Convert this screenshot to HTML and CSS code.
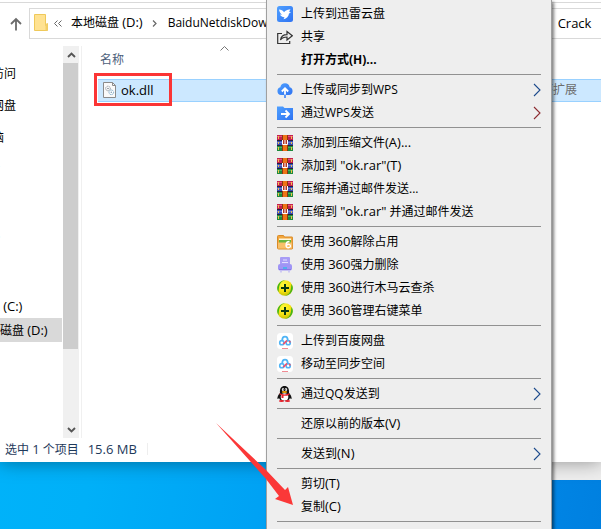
FILE: index.html
```html
<!DOCTYPE html>
<html lang="zh-CN">
<head>
    <meta charset="UTF-8">
    <meta name="viewport" content="width=device-width, initial-scale=1.0">
    <title>ok.dll</title>
    <link rel="stylesheet" href="styles.css">
</head>
<body>

<svg class="sprites" aria-hidden="true">
    <defs>
        <linearGradient id="blue" x1="0" y1="0" x2="1" y2="1">
            <stop offset="0" stop-color="#4fa0ff"/><stop offset="1" stop-color="#2f73f2"/>
        </linearGradient>
        <radialGradient id="ball" cx=".4" cy=".3" r=".75">
            <stop offset="0" stop-color="#fffb3c"/><stop offset=".6" stop-color="#f3e012"/><stop offset="1" stop-color="#b9b800"/>
        </radialGradient>
    </defs>
    <symbol id="chevron" viewBox="0 0 8 14">
        <path d="M1 1l6 6-6 6" fill="none" stroke="currentColor" stroke-width="1.1"/>
    </symbol>
    <symbol id="rar" viewBox="0 0 16 16">
        <path d="M0 0h16v5H0z" fill="#c5204f"/>
        <path d="M0 1h16v1H0z" fill="#e4557c"/>
        <path d="M0 5h16v1H0zM0 10h16v1H0z" fill="#24203a"/>
        <path d="M0 6h16v4H0z" fill="#3a4fb5"/>
        <path d="M0 7h16v1H0z" fill="#6878d2"/>
        <path d="M0 11h16v5H0z" fill="#1e8a3c"/>
        <path d="M0 12h16v1H0z" fill="#45b05c"/>
        <path d="M1 1h1v3H1zM1 7h1v2H1zM1 12h1v3H1zM14 1h1v3h-1zM14 7h1v2h-1zM14 12h1v3h-1z" fill="#f0c04a"/>
        <path d="M5 0h6v16H5z" fill="#8a3512"/>
        <path d="M6 0h4v16H6z" fill="#ee7416"/>
        <path d="M5 5h6v5H5z" fill="#b33524"/>
        <path d="M5.500 5v4.500h5V5M8 5v4" fill="none" stroke="#fff" stroke-width="1"/>
    </symbol>
    <symbol id="guard" viewBox="0 0 16 16">
        <circle cx="8" cy="8" r="7.800" fill="url(#ball)"/>
        <path d="M.3 7C1.500 2.500 5 .2 8 .2 5 1 3 3 2.300 6c-.6 2.500-.5 4-.8 6C.6 10.500 0 9 .3 7zM15.700 9c-1.200 4.500-4.700 6.800-7.700 6.800 3-.8 5-2.800 5.700-5.800.6-2.500.5-4 .8-6 .9 1.500 1.500 3 1.200 5z" fill="#3fb51c"/>
        <path d="M8 4v8M4 8h8" stroke="#0b3b12" stroke-width="2"/>
    </symbol>
    <symbol id="netdisk" viewBox="0 0 16 16">
        <rect width="16" height="16" rx="3.500" fill="#fff"/>
        <path d="M5.300 7C5.300 2.500 10.700 2.500 10.700 7" fill="none" stroke="#4fb4f5" stroke-width="1.800"/>
        <circle cx="4.800" cy="9.700" r="2.100" fill="none" stroke="#4fb4f5" stroke-width="1.600"/>
        <circle cx="11.200" cy="9.700" r="2.100" fill="none" stroke="#4fb4f5" stroke-width="1.600"/>
        <path d="M6.300 11.200L10 7.500" stroke="#f2506b" stroke-width="1.700"/>
        <path d="M12.300 8l1 1.500" stroke="#f2506b" stroke-width="1.500"/>
        <path d="M5 15.500h6" stroke="#f08b93"/>
    </symbol>
</svg>

<main class="desktop">
    <section class="explorer">
        <header class="address-row">
            <button class="up" aria-label="向上">
                <svg width="12" height="14" viewBox="0 0 12 14"><path d="M6 13.500V2M1 7l5-5 5 5" fill="none" stroke="#6b6b6b" stroke-width="1.800"/></svg>
            </button>
            <nav class="address">
                <svg class="folder" width="14" height="17" viewBox="0 0 14 17">
                    <path d="M.5.500h11v11l2-2v7h-13z" fill="#ffe291" stroke="#efc95a"/>
                    <path d="M11.500 9.500h2v7h-2z" fill="#f3cf69"/>
                </svg>
                <svg class="back" width="8" height="7" viewBox="0 0 8 7"><path d="M3.500.5l-3 3 3 3M7.500.5l-3 3 3 3" fill="none" stroke="#666"/></svg>
                <a class="crumb drive" href="#">本地磁盘 <span class="latin">(D:)</span></a>
                <svg class="next" width="5" height="7" viewBox="0 0 5 7"><path d="M1 .5l3 3-3 3" fill="none" stroke="#666" stroke-width="1.200"/></svg>
                <a class="crumb download" href="#">BaiduNetdiskDownload</a>
                <a class="crumb latin" href="#">Crack</a>
            </nav>
        </header>

        <div class="content">
            <nav class="tree">
                <a class="root" href="#">快速访问</a>
                <a class="root" href="#">百度网盘</a>
                <a class="root" href="#">此电脑</a>
                <a href="#">视频</a>
                <a href="#">图片</a>
                <a href="#">文档</a>
                <a href="#">下载</a>
                <a href="#">音乐</a>
                <a href="#">桌面</a>
                <a href="#">系统 <span class="latin">(C:)</span></a>
                <a class="current" href="#">本地磁盘 <span class="latin">(D:)</span></a>
            </nav>
            <div class="scrollbar">
                <button aria-label="向上滚动"><svg width="9" height="6" viewBox="0 0 9 6"><path d="M1 5l3.500-3.500L8 5" fill="none" stroke="#555" stroke-width="1.900"/></svg></button>
                <div class="thumb"></div>
                <button aria-label="向下滚动"><svg width="9" height="6" viewBox="0 0 9 6"><path d="M1 1l3.500 3.500L8 1" fill="none" stroke="#555" stroke-width="1.900"/></svg></button>
            </div>
            <div class="files">
                <svg class="sort" width="9" height="5" viewBox="0 0 9 5"><path d="M.5 4.500l4-4 4 4" fill="none" stroke="#777"/></svg>
                <table>
                    <thead>
                        <tr><th class="name">名称</th><th>类型</th></tr>
                    </thead>
                    <tbody>
                        <tr>
                            <td>
                                <div class="file latin">
                                    <svg width="13" height="16" viewBox="0 0 13 16">
                                        <path d="M.5.500h9l3 3v12H.5z" fill="#fafafa" stroke="#8b8b8b"/>
                                        <path d="M9.500.5v3h3" fill="none" stroke="#8b8b8b"/>
                                        <circle cx="5" cy="6.500" r="2.300" fill="#fff" stroke="#8a939b" stroke-dasharray="1.200 .6"/>
                                        <circle cx="5" cy="6.500" r=".8" fill="#7c868e"/>
                                        <circle cx="8.300" cy="10.300" r="2.300" fill="#fff" stroke="#72a5c8" stroke-dasharray="1.200 .6"/>
                                        <circle cx="8.300" cy="10.300" r=".8" fill="#7c9db4"/>
                                    </svg>
                                    ok.dll
                                </div>
                            </td>
                            <td class="type">应用程序扩展</td>
                        </tr>
                    </tbody>
                </table>
                <div class="highlight"></div>
            </div>
        </div>

        <footer class="status">
            <span>选中 <span class="latin">1</span> 个项目</span>
            <span class="size latin">15.6 MB</span>
        </footer>
    </section>
    <div class="back-window"></div>
</main>

<div class="menu" role="menu">
    <button role="menuitem">
        <svg class="icon" viewBox="0 0 16 16"><rect width="16" height="16" rx="2.500" fill="url(#blue)"/><path d="M2 3.500c2 .2 4 1 5 2.700C8.300 5 9.500 3.500 13.500 3.200c-.8 1-1 1.800-1.200 2.800l1.700.5-2 1c-.3 3-2.300 5-5.500 5.700l1-2C5 11 3.500 10 3 8.500l2 .3C3.500 7.500 2.300 5.700 2 3.500z" fill="#fff"/></svg>
        上传到迅雷云盘
    </button>
    <button role="menuitem">
        <svg class="icon" viewBox="0 0 16 16"><path d="M5 4.500H.7v10h12V12M3.500 11c.5-3.500 3-5.300 6.500-5.300V2.500l5.300 4.200L10 11V8c-3 0-5 .8-6.500 3z" fill="none" stroke="#333" stroke-width="1.200"/></svg>
        共享
    </button>
    <button class="default" role="menuitem">
        <span class="icon"></span>
        <span>打开方式(H)...</span>
    </button>
    <hr>
    <button role="menuitem">
        <svg class="icon" viewBox="0 0 16 16"><path d="M4 13a4 4 0 0 1-.7-7.800 4.800 4.800 0 0 1 9.400 0A4 4 0 0 1 12 13z" fill="url(#blue)"/><path d="M8 13V7M4.800 9.500L8 6.300l3.200 3.200" fill="none" stroke="#fff" stroke-width="1.800"/><path d="M8 12.500V16" stroke="#3b82f6" stroke-width="1.600"/></svg>
        上传或同步到WPS
        <svg class="chevron"><use href="#chevron"/></svg>
    </button>
    <button role="menuitem">
        <svg class="icon" viewBox="0 0 16 16"><path d="M0 1.500h6l1.500 1.500H16v12H0z" fill="url(#blue)"/><path d="M4 9h8M8.500 5.500L12 9l-3.500 3.500" fill="none" stroke="#fff" stroke-width="1.800"/></svg>
        通过WPS发送
        <svg class="chevron red"><use href="#chevron"/></svg>
    </button>
    <hr>
    <button role="menuitem">
        <svg class="icon"><use href="#rar"/></svg>
        <span>添加到压缩文件<span class="latin">(A)...</span></span>
    </button>
    <button role="menuitem">
        <svg class="icon"><use href="#rar"/></svg>
        <span>添加到 <span class="latin">"ok.rar"(T)</span></span>
    </button>
    <button role="menuitem">
        <svg class="icon"><use href="#rar"/></svg>
        <span>压缩并通过邮件发送...</span>
    </button>
    <button role="menuitem">
        <svg class="icon"><use href="#rar"/></svg>
        <span>压缩到 <span class="latin">"ok.rar"</span> 并通过邮件发送</span>
    </button>
    <hr>
    <button role="menuitem">
        <svg class="icon" viewBox="0 0 16 16"><path d="M.5 2.500q0-1 1-1h5l1 1.500H15q.7 0 .7.700V14q0 1-1 1h-13q-1.200 0-1.200-1z" fill="#f2a63c" stroke="#d98a28"/><path d="M2 4.500h12v2H2z" fill="#fff6dc"/><path d="M2 6h12v3H2z" fill="#68b53d"/><path d="M1 8.500h14v6H1z" fill="#f8c069"/><path d="M12.500 7.500c-2.500 0-3.500 1.500-3.500 3.700 0 3.500 4.500 3 4.500.8 0-2-3-2.300-4-.7" fill="none" stroke="#fff" stroke-width="1.300"/></svg>
        <span>使用 <span class="latin">360</span>解除占用</span>
    </button>
    <button role="menuitem">
        <svg class="icon" viewBox="0 0 16 16"><rect x="3" y="0" width="10" height="9" rx="1" fill="#a89cf5"/><path d="M6 3h4M5 5.500h6" stroke="#e4dfff"/><rect x="1" y="7" width="14" height="6.500" rx="2" fill="#a095f5"/><path d="M2 12.500h12" stroke="#8578e8"/><path d="M6 11h4" stroke="#35b8e8" stroke-width="1.500"/><path d="M4 13.500v2M12 13.500v2" stroke="#c3bcf5" stroke-width="1.500"/></svg>
        <span>使用 <span class="latin">360</span>强力删除</span>
    </button>
    <button role="menuitem">
        <svg class="icon"><use href="#guard"/></svg>
        <span>使用 <span class="latin">360</span>进行木马云查杀</span>
    </button>
    <button role="menuitem">
        <svg class="icon"><use href="#guard"/></svg>
        <span>使用 <span class="latin">360</span>管理右键菜单</span>
    </button>
    <hr>
    <button role="menuitem">
        <svg class="icon"><use href="#netdisk"/></svg>
        上传到百度网盘
    </button>
    <button role="menuitem">
        <svg class="icon"><use href="#netdisk"/></svg>
        移动至同步空间
    </button>
    <hr>
    <button role="menuitem">
        <svg class="icon" viewBox="0 0 16 16"><path d="M3 7C2.500 2.500 4.500 0 7.500 0S12.500 2.500 12 7c1.500 1.500 3 4 2.500 6-.5.300-1-.5-1.500-1-.5 2-2.500 3-5.500 3S2.500 14 2 12c-.5.500-1 1.300-1.500 1C0 11 1.500 8.500 3 7z" fill="#111"/><ellipse cx="7.500" cy="11" rx="3.800" ry="3.700" fill="#fff"/><ellipse cx="6" cy="3.500" rx="1.100" ry="1.600" fill="#fff"/><ellipse cx="9" cy="3.500" rx="1.100" ry="1.600" fill="#fff"/><path d="M6.300 3.300v1M8.700 3.300v1" stroke="#111"/><ellipse cx="7.500" cy="6" rx="2.700" ry=".9" fill="#f5a300"/><path d="M2.700 7.300c3 1.500 6.500 1.500 9.600 0l.3 1.400c-2 1-4.300 1.300-6.100 1.100V12H4.500V9.300l-2-.8z" fill="#e5202b"/><ellipse cx="4.500" cy="15" rx="2.600" ry="1" fill="#e5202b"/><ellipse cx="10.500" cy="15" rx="2.600" ry="1" fill="#e5202b"/></svg>
        通过QQ发送到
        <svg class="chevron"><use href="#chevron"/></svg>
    </button>
    <hr>
    <button role="menuitem">
        <span class="icon"></span>
        <span>还原以前的版本<span class="latin">(V)</span></span>
    </button>
    <hr>
    <button role="menuitem">
        <span class="icon"></span>
        <span>发送到<span class="latin">(N)</span></span>
        <svg class="chevron"><use href="#chevron"/></svg>
    </button>
    <hr>
    <button role="menuitem">
        <span class="icon"></span>
        <span>剪切<span class="latin">(T)</span></span>
    </button>
    <button role="menuitem">
        <span class="icon"></span>
        <span>复制<span class="latin">(C)</span></span>
    </button>
    <hr>
</div>

<svg class="pointer" width="78" height="84" viewBox="0 0 78 84" aria-hidden="true">
    <path d="M0 0l50 47 19 20 3-3 5 18-18-6 4-3-13-17z" fill="#fb3838"/>
</svg>

</body>
</html>
```
FILE: styles.css
```css
* {
    box-sizing: border-box;
}
body {
    margin: 0;
    position: relative;
    height: 100vh;
    overflow: hidden;
    font-family: "Open Sans", "Noto Sans CJK SC", sans-serif;
    font-size: 12px;
    line-height: 16px;
    color: #000;
}
button {
    font: inherit;
    color: inherit;
    border: none;
    background: none;
    padding: 0;
}
a {
    color: inherit;
    text-decoration: none;
}
svg {
    display: block;
    flex: none;
}
.sprites {
    position: absolute;
    width: 0;
    height: 0;
}
.latin {
    font-size: 13px;
}

/* desktop and file window */
.desktop {
    display: flex;
    flex-direction: column;
    height: 100%;
    padding-bottom: 49px;
    background: linear-gradient(100deg, #00b4fb 0%, #00b0f8 25%, #00a2f4 50%, #0088e8 85%, #0080e0 100%);
}
.explorer {
    flex: 1;
    display: flex;
    flex-direction: column;
    min-height: 0;
    background: #fff;
    box-shadow: 0 0 18px rgba(0, 0, 0, 0.4);
    z-index: 1;
}
.back-window {
    height: 18px;
    margin-left: 552px;
    background: #eee;
}
.address-row {
    display: flex;
    align-items: center;
    margin-top: 2px;
    padding-top: 5px;
    border-top: 1px solid #d9d9d9;
}
.up {
    margin: 0 7px 0 10px;
}
.address {
    flex: 1;
    display: flex;
    align-items: center;
    height: 31px;
    padding-left: 4px;
    border: 1px solid #d9d9d9;
    border-right: none;
    white-space: nowrap;
}
.folder {
    margin-bottom: 2px;
}
.crumb {
    padding-bottom: 2px;
}
.back {
    margin: 0 9px 0 6px;
}
.next {
    margin: 0 11px 0 9px;
}
.download {
    width: 390px;
}

.content {
    flex: 1;
    display: flex;
    min-height: 0;
}
.tree {
    width: 62px;
    padding-top: 23px;
    overflow: hidden;
    white-space: nowrap;
}
.tree a {
    display: block;
    height: 24px;
    line-height: 24px;
    text-indent: -24px;
}
.tree .root {
    text-indent: -32px;
    margin-bottom: 8px;
}
.tree .root:nth-child(3) {
    margin-bottom: 0;
}
.tree .current {
    background: #d9d9d9;
}
.scrollbar {
    display: flex;
    flex-direction: column;
    width: 16px;
    margin: 7px 2px 0 1px;
    background: #f0f0f0;
}
.scrollbar button {
    display: flex;
    align-items: center;
    justify-content: center;
    height: 17px;
}
.thumb {
    height: 73%;
    margin-right: 1px;
    background: #cdcdcd;
}
.scrollbar button:last-child {
    margin-top: auto;
}
.files {
    position: relative;
    flex: 1;
    margin-top: 7px;
    padding-left: 16px;
    border-left: 1px solid #f0f0f0;
}
.sort {
    position: absolute;
    left: 138px;
    top: 0;
}
table {
    width: 100%;
    border-collapse: collapse;
    table-layout: fixed;
}
th {
    height: 33px;
    padding: 0 2px 4px;
    font-weight: normal;
    text-align: left;
    color: #4c607a;
}
.name {
    width: 405px;
}
td {
    height: 22px;
    padding: 0 2px;
    background: #cce8ff;
    border-top: 1px solid #99d1ff;
    border-bottom: 1px solid #99d1ff;
    white-space: nowrap;
}
.file {
    display: flex;
    align-items: center;
    gap: 5px;
    padding-left: 3px;
}
.type {
    color: #6d6d6d;
}
.highlight {
    position: absolute;
    left: 12px;
    top: 27px;
    width: 78px;
    height: 33px;
    border: 3px solid #fb3535;
}
.status {
    display: flex;
    align-items: center;
    height: 24px;
    padding: 0 0 2px 5px;
    color: #1e395b;
}
.size {
    margin-left: 9px;
    padding-right: 10px;
    border-right: 1px solid #eee;
    line-height: 12px;
}

/* context menu */
.menu {
    position: absolute;
    left: 266px;
    top: 0;
    bottom: 0;
    width: 286px;
    padding: 2px 10px 0;
    background: #eee;
    border: solid #a0a0a0;
    border-width: 0 1px;
    box-shadow: 2px 2px 3px rgba(0, 0, 0, 0.5);
    z-index: 2;
}
.menu button {
    display: flex;
    align-items: center;
    gap: 8px;
    width: 100%;
    height: 23px;
    white-space: nowrap;
}
.menu .default {
    font-weight: bold;
}
.menu hr {
    margin: 3px 0;
    border: none;
    border-top: 1px solid #919191;
}
.icon {
    flex: none;
    width: 16px;
    height: 16px;
}
.chevron {
    width: 8px;
    height: 14px;
    margin-left: auto;
    color: #1c4a8c;
}
.red {
    color: #8c2a30;
}

.pointer {
    position: absolute;
    left: 216px;
    top: 423px;
    z-index: 3;
}
```
